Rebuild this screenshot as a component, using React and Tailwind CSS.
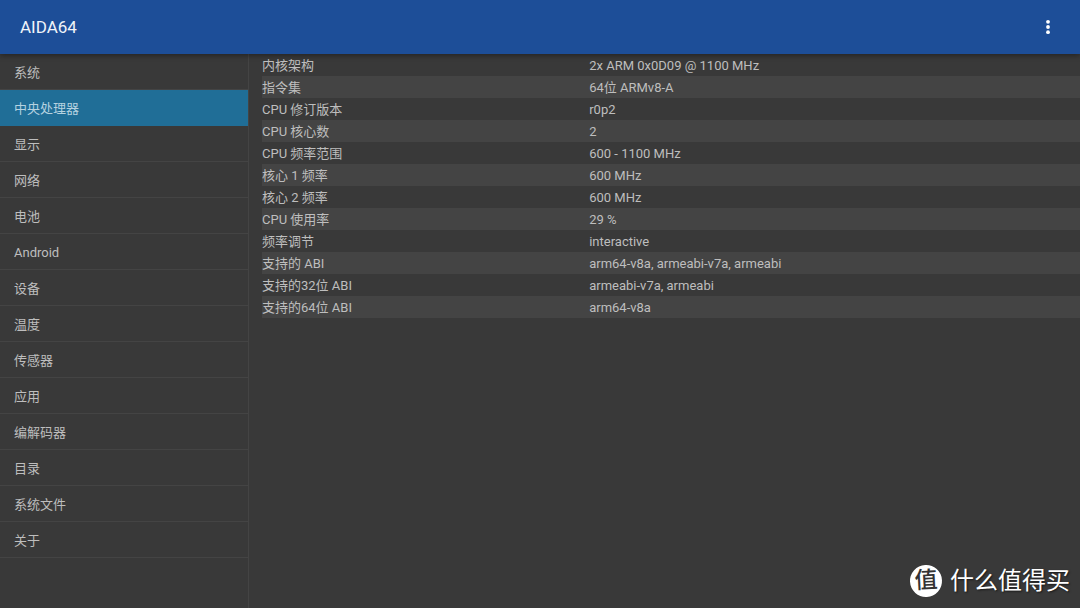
import { useState } from 'react';

const sections = [
    "系统",
    "中央处理器",
    "显示",
    "网络",
    "电池",
    "Android",
    "设备",
    "温度",
    "传感器",
    "应用",
    "编解码器",
    "目录",
    "系统文件",
    "关于"
];

const cpuInfo = [
    { label: "内核架构", value: "2x ARM 0x0D09 @ 1100 MHz" },
    { label: "指令集", value: "64位 ARMv8-A" },
    { label: "CPU 修订版本", value: "r0p2" },
    { label: "CPU 核心数", value: "2" },
    { label: "CPU 频率范围", value: "600 - 1100 MHz" },
    { label: "核心 1 频率", value: "600 MHz" },
    { label: "核心 2 频率", value: "600 MHz" },
    { label: "CPU 使用率", value: "29 %" },
    { label: "频率调节", value: "interactive" },
    { label: "支持的 ABI", value: "arm64-v8a, armeabi-v7a, armeabi" },
    { label: "支持的32位 ABI", value: "armeabi-v7a, armeabi" },
    { label: "支持的64位 ABI", value: "arm64-v8a" }
];

function Header() {
    return (
        <header className="relative z-10 flex h-[54px] items-center justify-between bg-[#1d4e98] px-5 shadow-[0_2px_5px_rgba(0,0,0,0.35)]">
            <h1 className="text-[17px] leading-6 text-[#f0f3f8]">AIDA64</h1>
            <button type="button" aria-label="更多选项" className="flex h-6 w-6 items-center justify-center">
                <svg viewBox="0 0 24 24" className="h-6 w-6 fill-white">
                    <circle cx="12" cy="6.8" r="1.9" />
                    <circle cx="12" cy="12" r="1.9" />
                    <circle cx="12" cy="17.2" r="1.9" />
                </svg>
            </button>
        </header>
    );
}

function Watermark() {
    return (
        <div className="absolute right-[10px] bottom-[11px] flex items-center gap-2 text-white">
            <span className="flex h-8 w-8 -rotate-3 items-center justify-center rounded-full bg-white text-[23px] leading-8 font-medium text-[#333333]">
                值
            </span>
            <span className="text-[24px] leading-8 [text-shadow:1px_1px_2px_rgba(0,0,0,0.6)]">什么值得买</span>
        </div>
    );
}

export default function App() {
    const [active, setActive] = useState(1);

    return (
        <div
            lang="zh-CN"
            className="relative flex min-h-screen flex-col bg-[#393939] font-[Roboto,'Noto_Sans_CJK_SC',sans-serif] text-[#bebebe]"
        >
            <Header />

            <div className="flex flex-1">
                {/* Section list */}
                <nav className="w-[249px] shrink-0 border-r border-[#444444]">
                    <ul>
                        {sections.map((name, i) => (
                            <li key={name}>
                                <button
                                    type="button"
                                    onClick={() => setActive(i)}
                                    className={`block h-9 w-full border-b px-[14px] pt-[2px] text-left text-[13px] leading-5
                                    ${i === active ? "border-[#206e97] bg-[#206e97] text-[#b5d2e0]" : "border-[#444444]"}`}
                                >
                                    {name}
                                </button>
                            </li>
                        ))}
                    </ul>
                </nav>

                {/* Details */}
                <main className="flex-1 pl-[13px]">
                    <table className="w-full table-fixed border-collapse text-[13px] leading-5">
                        <tbody>
                            {cpuInfo.map((row) => (
                                <tr key={row.label} className="even:bg-[#444444]">
                                    <th scope="row" className="w-2/5 p-0 pt-[2px] text-left font-normal">{row.label}</th>
                                    <td className="p-0 pt-[2px]">{row.value}</td>
                                </tr>
                            ))}
                        </tbody>
                    </table>
                </main>
            </div>

            <Watermark />
        </div>
    );
}
